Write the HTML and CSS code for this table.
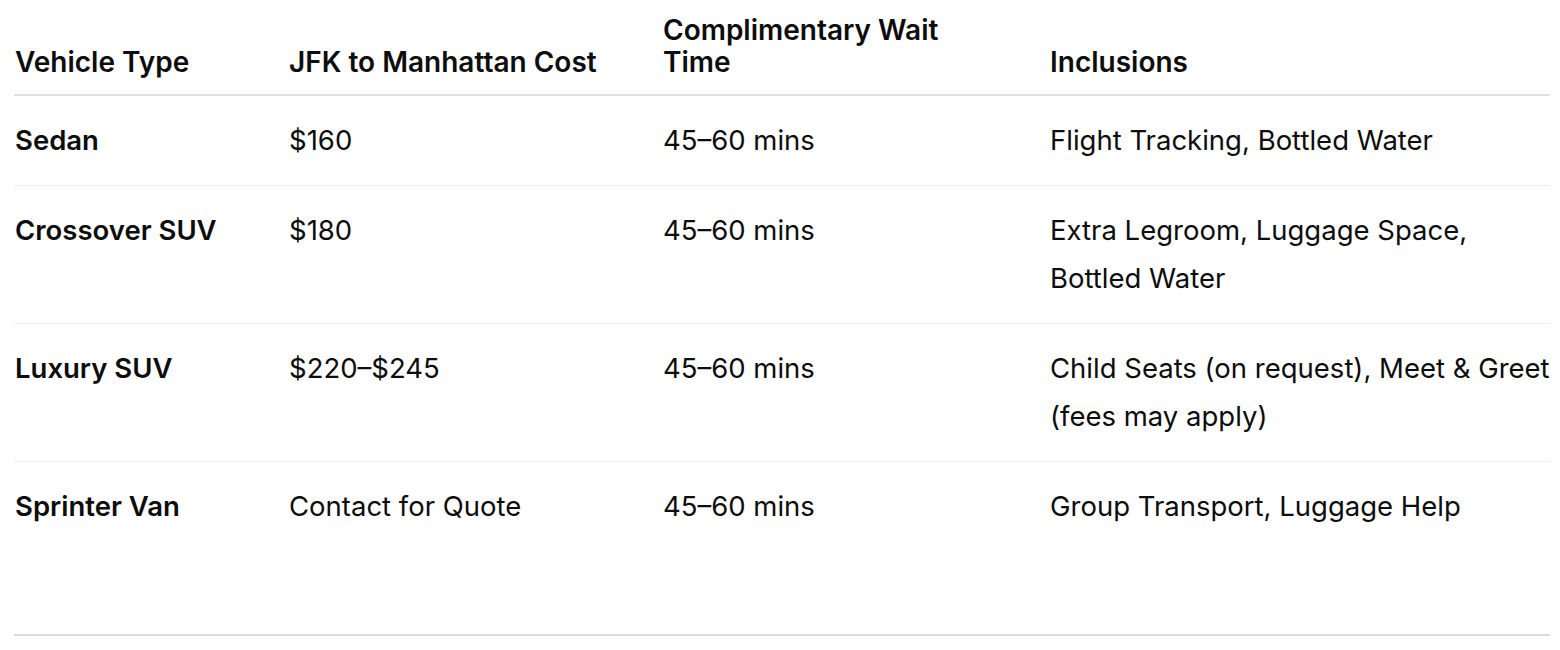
FILE: index.html
```html
<!DOCTYPE html>
<html>
<head>
<meta charset="utf-8">
<link rel="stylesheet" href="styles.css">
</head>
<body>
<div class="wrap">
  <table class="tbl">
    <colgroup>
      <col class="c1"><col class="c2"><col class="c3"><col class="c4">
    </colgroup>
    <thead>
      <tr>
        <th>Vehicle Type</th>
        <th>JFK to Manhattan Cost</th>
        <th>Complimentary Wait<br>Time</th>
        <th>Inclusions</th>
      </tr>
    </thead>
    <tbody>
      <tr>
        <td class="name">Sedan</td>
        <td>$160</td>
        <td>45–60 mins</td>
        <td>Flight Tracking, Bottled Water</td>
      </tr>
      <tr>
        <td class="name">Crossover SUV</td>
        <td>$180</td>
        <td>45–60 mins</td>
        <td>Extra Legroom, Luggage Space,<br>Bottled Water</td>
      </tr>
      <tr>
        <td class="name">Luxury SUV</td>
        <td>$220–$245</td>
        <td>45–60 mins</td>
        <td>Child Seats (on request), Meet &amp; Greet<br>(fees may apply)</td>
      </tr>
      <tr class="last">
        <td class="name">Sprinter Van</td>
        <td>Contact for Quote</td>
        <td>45–60 mins</td>
        <td>Group Transport, Luggage Help</td>
      </tr>
    </tbody>
  </table>
</div>
</body>
</html>
```
FILE: styles.css
```css
html, body {
  margin: 0;
  padding: 0;
  background: #ffffff;
}
body {
  font-family: Inter, "Noto Sans", sans-serif;
  color: #0d0d0d;
}
.wrap {
  margin: 0 10px 0 14px;
  padding-bottom: 83px;
  border-bottom: 2px solid #dcdcdc;
}
.tbl {
  width: 100%;
  border-collapse: collapse;
  font-size: 27.5px;
  table-layout: fixed;
}
.c1 { width: 274px; }
.c2 { width: 374px; }
.c3 { width: 387px; }
.c4 { width: auto; }
th {
  text-align: left;
  font-weight: 600;
  font-size: 28px;
  vertical-align: bottom;
  line-height: 32px;
  padding: 14px 0 16px 1px;
  border-bottom: 2px solid #e0e0e0;
}
td {
  text-align: left;
  vertical-align: top;
  line-height: 48px;
  padding: 20px 0 21px 1px;
  border-bottom: 1px solid #efefef;
}
tr.last td {
  border-bottom: none;
}
td.name {
  font-weight: 600;
}
```
